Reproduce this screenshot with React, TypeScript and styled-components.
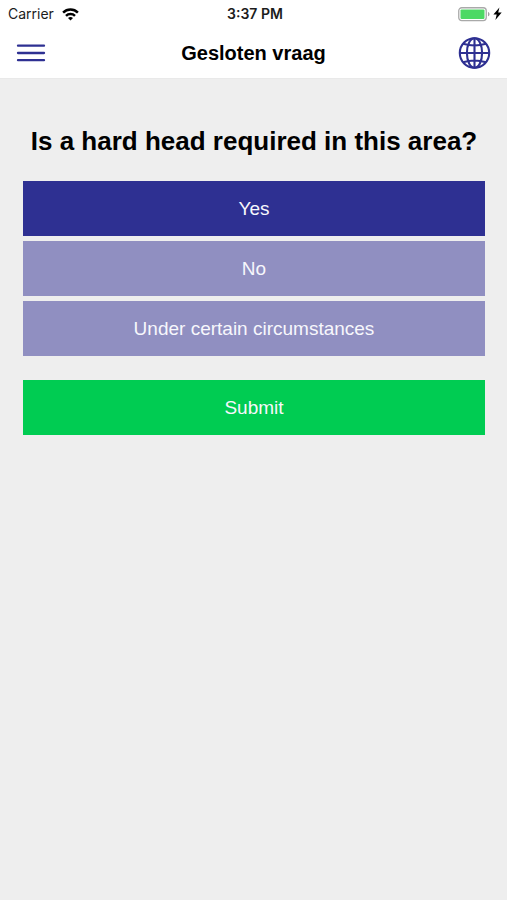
import React, { useState } from "react";
import styled, { createGlobalStyle } from "styled-components";

const GlobalStyle = createGlobalStyle`
  *, *::before, *::after { box-sizing: border-box; }
  body {
    margin: 0;
    background: #eeeeee;
    color: #000000;
    font-family: "Liberation Sans", Arial, Helvetica, sans-serif;
  }
`;

const Screen = styled.div`
  min-height: 100vh;
  background: #eeeeee;
`;

const Header = styled.header`
  background: #ffffff;
  border-bottom: 1px solid #e9e9e9;
`;

const StatusBar = styled.div`
  display: grid;
  grid-template-columns: 1fr auto 1fr;
  align-items: center;
  height: 28px;
  padding: 0 5px 0 8px;
  font-family: Inter, Roboto, sans-serif;
  font-size: 14px;
  line-height: 20px;
  color: #1c1c1c;
`;

const Carrier = styled.div`
  display: flex;
  align-items: center;
  gap: 8px;
`;

const Clock = styled.time`
  font-weight: 600;
`;

const Power = styled.div`
  display: flex;
  align-items: center;
  justify-content: flex-end;
  gap: 3px;
`;

const NavBar = styled.div`
  display: grid;
  grid-template-columns: 1fr auto 1fr;
  align-items: center;
  height: 50px;
  padding: 0 16px;
`;

const Title = styled.h1`
  margin: 0;
  font-size: 20px;
  line-height: 24px;
  font-weight: 700;
`;

const IconButton = styled.button<{ $side: "start" | "end" }>`
  display: flex;
  justify-self: ${({ $side }) => $side};
  padding: 0;
  border: 0;
  background: none;
  color: #2e3092;
  cursor: pointer;
`;

const Content = styled.main`
  padding: 46px 22px 24px 23px;
`;

const Question = styled.h2`
  margin: 0 0 24px;
  font-size: 26px;
  line-height: 32px;
  font-weight: 700;
  text-align: center;
`;

const Options = styled.div`
  display: flex;
  flex-direction: column;
  gap: 5px;
  margin-bottom: 24px;
`;

const tones = {
  selected: "#2e3092",
  idle: "#908fc1",
  submit: "#00cc52",
};

const ActionButton = styled.button<{ $tone: keyof typeof tones }>`
  width: 100%;
  min-height: 55px;
  padding: 8px 16px;
  border: 0;
  background: ${({ $tone }) => tones[$tone]};
  color: #f7f7fc;
  font: inherit;
  font-size: 19px;
  line-height: 24px;
  cursor: pointer;
`;

const WifiIcon = () => (
  <svg width="17" height="13" viewBox="0 0 17 13" fill="none" stroke="#000" strokeWidth="2.5" aria-hidden="true">
    <path d="M1.1 4.6a10.6 10.6 0 0 1 14.8 0" />
    <path d="M4 7.9a6.4 6.4 0 0 1 9 0" />
    <path d="M8.5 12.6 6 10.1a3.6 3.6 0 0 1 5 0z" fill="#000" stroke="none" />
  </svg>
);

const BatteryIcon = () => (
  <svg width="32" height="15" viewBox="0 0 32 15" aria-hidden="true">
    <rect x=".75" y=".75" width="27.5" height="12.8" rx="3" fill="#fff" stroke="#a9a9a9" strokeWidth="1.3" />
    <rect x="2.5" y="2.4" width="24" height="9.5" rx="1.2" fill="#4cd964" />
    <path d="M30 4.9c2 .7 2 3.7 0 4.4z" fill="#a0a0a0" />
  </svg>
);

const BoltIcon = () => (
  <svg width="9" height="14" viewBox="0 0 9 14" aria-hidden="true">
    <path d="M6.4.6.4 7.6h3.3L2.4 12.9 8.7 5.5H5.2z" fill="#000" />
  </svg>
);

const MenuIcon = () => (
  <svg width="30" height="20" viewBox="0 0 30 20" stroke="currentColor" strokeWidth="2.3" strokeLinecap="round" aria-hidden="true">
    <path d="M2 2.7h26M2 10h26M2 17.2h26" />
  </svg>
);

const GlobeIcon = () => (
  <svg width="33" height="33" viewBox="0 0 33 33" fill="none" stroke="currentColor" strokeWidth="2.1" aria-hidden="true">
    <circle cx="16.5" cy="16" r="14.7" />
    <ellipse cx="16.5" cy="16" rx="7.6" ry="14.7" />
    <path d="M16.5 1.3v29.4M1.8 16h29.4M5 6.8c6.6 2 16.4 2 23 0M5 25.2c6.6-2 16.4-2 23 0" />
  </svg>
);

const options = ["Yes", "No", "Under certain circumstances"];

export default function App() {
  const [answer, setAnswer] = useState("Yes");

  return (
    <Screen>
      <GlobalStyle />
      <Header>
        <StatusBar>
          <Carrier>
            Carrier
            <WifiIcon />
          </Carrier>
          <Clock>3:37 PM</Clock>
          <Power>
            <BatteryIcon />
            <BoltIcon />
          </Power>
        </StatusBar>
        <NavBar>
          <IconButton type="button" $side="start" aria-label="Menu">
            <MenuIcon />
          </IconButton>
          <Title>Gesloten vraag</Title>
          <IconButton type="button" $side="end" aria-label="Language">
            <GlobeIcon />
          </IconButton>
        </NavBar>
      </Header>
      <Content>
        <Question id="question">Is a hard head required in this area?</Question>
        <Options role="group" aria-labelledby="question">
          {options.map((option) => (
            <ActionButton
              key={option}
              type="button"
              $tone={option === answer ? "selected" : "idle"}
              aria-pressed={option === answer}
              onClick={() => setAnswer(option)}
            >
              {option}
            </ActionButton>
          ))}
        </Options>
        <ActionButton type="submit" $tone="submit">
          Submit
        </ActionButton>
      </Content>
    </Screen>
  );
}
